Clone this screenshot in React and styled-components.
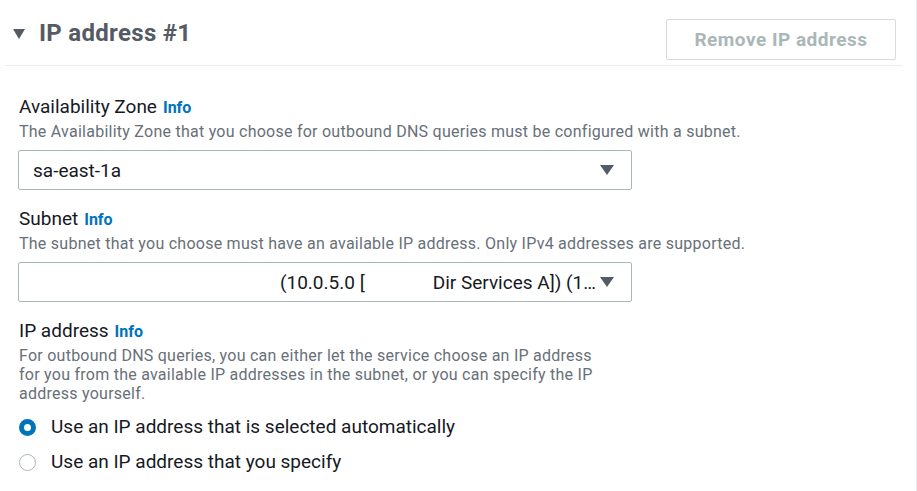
import React from "react";
import styled, { createGlobalStyle } from "styled-components";

const GlobalStyle = createGlobalStyle`
  html, body {
    margin: 0;
    padding: 0;
    background: #ffffff;
  }
  body {
    font-family: Roboto, "Liberation Sans", Arial, sans-serif;
    color: #16191f;
  }
`;

const Page = styled.div`
  box-sizing: border-box;
  width: 917px;
  height: 491px;
  border-right: 1px solid #eaeded;
  overflow: hidden;
`;

const Header = styled.div`
  display: flex;
  justify-content: space-between;
  align-items: flex-start;
  height: 66px;
  box-sizing: border-box;
  margin: 0 14px 0 5px;
  padding: 19px 6px 0 8px;
  border-bottom: 1px solid #eaeded;
`;

const Title = styled.h2`
  display: flex;
  align-items: center;
  gap: 14px;
  margin: 0;
  font-size: 24px;
  line-height: 28px;
  font-weight: 700;
  letter-spacing: 0.3px;
  color: #545b64;
`;

const Caret = styled.span`
  display: inline-block;
  width: 0;
  height: 0;
  border-left: 6.5px solid transparent;
  border-right: 6.5px solid transparent;
  border-top: 10px solid #545b64;
  margin-top: 1px;
`;

const Button = styled.button`
  box-sizing: border-box;
  width: 230px;
  height: 41px;
  background: #ffffff;
  border: 1px solid #d5dbdb;
  border-radius: 2px;
  font-family: inherit;
  font-size: 19px;
  font-weight: 700;
  letter-spacing: 0.5px;
  color: #aab7b8;
  cursor: default;
`;

const Body = styled.div`
  display: flex;
  flex-direction: column;
  gap: 18px;
  padding: 30px 0 0 18px;
`;

const Field = styled.div`
  display: flex;
  flex-direction: column;
`;

const Label = styled.div`
  font-size: 19px;
  line-height: 22px;
  color: #16191f;
  padding-left: 1px;
`;

const Info = styled.a`
  font-size: 16px;
  font-weight: 700;
  color: #0073bb;
  margin-left: 6px;
  text-decoration: none;
`;

const Description = styled.div`
  margin-top: 3px;
  padding-left: 1px;
  max-width: ${(p) => p.$maxWidth || "none"};
  font-size: 16px;
  line-height: 19px;
  letter-spacing: 0.25px;
  color: #687078;
`;

const Select = styled.div`
  box-sizing: border-box;
  display: flex;
  align-items: center;
  width: 614px;
  height: 40px;
  margin-top: 9px;
  padding: 0 17px 0 14px;
  border: 1px solid #aab7b8;
  border-radius: 2px;
  font-size: 19px;
  color: #16191f;
`;

const Value = styled.span`
  flex: 1;
  min-width: 0;
  white-space: nowrap;
  overflow: hidden;
`;

const Redacted = styled.span`
  display: inline-block;
  width: ${(p) => p.$w}px;
`;

const Arrow = styled.span`
  flex: none;
  width: 0;
  height: 0;
  margin-left: 4px;
  border-left: 7px solid transparent;
  border-right: 7px solid transparent;
  border-top: 10px solid #545b64;
`;

const RadioGroup = styled.div`
  display: flex;
  flex-direction: column;
  gap: 13px;
  margin-top: 13px;
`;

const RadioRow = styled.label`
  display: flex;
  align-items: center;
  gap: 15px;
  padding-left: 1px;
  font-size: 19px;
  line-height: 22px;
  color: #16191f;
`;

const RadioDot = styled.span`
  box-sizing: border-box;
  flex: none;
  width: 17px;
  height: 17px;
  border-radius: 50%;
  background: #ffffff;
  border: ${(p) => (p.$checked ? "5px solid #0073bb" : "1.5px solid #aab7b8")};
`;

const Radio = ({ checked, children }) => (
  <RadioRow>
    <RadioDot $checked={checked} />
    {children}
  </RadioRow>
);

export default function App() {
  return (
    <Page>
      <GlobalStyle />
      <Header>
        <Title>
          <Caret />
          IP address #1
        </Title>
        <Button>Remove IP address</Button>
      </Header>
      <Body>
        <Field>
          <Label>
            Availability Zone<Info>Info</Info>
          </Label>
          <Description>
            The Availability Zone that you choose for outbound DNS queries must be configured with a subnet.
          </Description>
          <Select>
            <Value>sa-east-1a</Value>
            <Arrow />
          </Select>
        </Field>
        <Field>
          <Label>
            Subnet<Info>Info</Info>
          </Label>
          <Description>
            The subnet that you choose must have an available IP address. Only IPv4 addresses are supported.
          </Description>
          <Select>
            <Value>
              <Redacted $w={247} />
              (10.0.5.0 [<Redacted $w={68} />
              Dir Services A]) (1…
            </Value>
            <Arrow />
          </Select>
        </Field>
        <Field>
          <Label>
            IP address<Info>Info</Info>
          </Label>
          <Description $maxWidth="575px">
            For outbound DNS queries, you can either let the service choose an IP address for you from the
            available IP addresses in the subnet, or you can specify the IP address yourself.
          </Description>
          <RadioGroup>
            <Radio checked>Use an IP address that is selected automatically</Radio>
            <Radio>Use an IP address that you specify</Radio>
          </RadioGroup>
        </Field>
      </Body>
    </Page>
  );
}
